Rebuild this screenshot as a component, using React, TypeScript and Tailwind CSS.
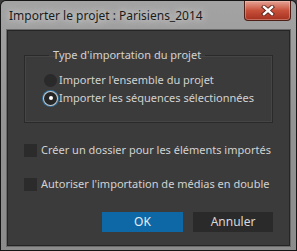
import React from 'react';

const font = { fontFamily: '"Noto Sans", "Open Sans", sans-serif' };

const Radio: React.FC<{ checked?: boolean; label: string }> = ({ checked, label }) => (
  <label className="flex h-[18px] items-center gap-[2px] whitespace-nowrap leading-[18px]">
    {checked ? (
      <span className="flex h-[13px] w-[13px] items-center justify-center rounded-full bg-[#262626] shadow-[0_0_0_1px_#c9c9c9,0_0_0_2px_#2f6f9c]">
        <span className="h-[4px] w-[4px] rounded-full bg-white" />
      </span>
    ) : (
      <span className="h-[13px] w-[13px] rounded-full bg-[#2a2a2a]" />
    )}
    <span>{label}</span>
  </label>
);

const Check: React.FC<{ label: string }> = ({ label }) => (
  <label className="flex h-[16px] items-center gap-[4px] whitespace-nowrap leading-[16px]">
    <span className="h-[13px] w-[13px] shrink-0 bg-[#2b2b2b]" />
    <span>{label}</span>
  </label>
);

const App: React.FC = () => {
  return (
    <div className="h-[251px] w-[297px] overflow-hidden bg-[#3a3a3a]">
      <div className="h-full w-full rounded-t-[6px] bg-[#161616] p-px" style={font}>
        <div className="flex h-full flex-col rounded-t-[5px] bg-gradient-to-b from-[#a3a3a3] via-[#939393] to-[#8c8c8c] px-[6px] pb-[4px]">
          {/* Title bar */}
          <div className="flex h-[29px] shrink-0 justify-between">
            <div className="pl-[2px] pt-[6px] text-[12px] text-[#1b1b1b] [text-shadow:0_0_6px_#d8d8d8,0_0_10px_#cfcfcf]">
              Importer le projet : Parisiens_2014
            </div>
            <button className="mr-[-1px] flex h-[20px] w-[47px] items-center justify-center rounded-b-[4px] border border-t-0 border-[#4e2018] bg-gradient-to-b from-[#e3a395] via-[#c7503a] to-[#a5301f] shadow-[inset_0_0_0_1px_rgba(255,220,210,0.35)]">
              <svg width="14" height="11" viewBox="0 0 14 11">
                <path d="M3 2 L11 9 M11 2 L3 9" stroke="#5a2218" strokeWidth="4.2" strokeLinecap="square" />
                <path d="M3 2 L11 9 M11 2 L3 9" stroke="#ffffff" strokeWidth="2.4" strokeLinecap="square" />
              </svg>
            </button>
          </div>

          {/* Content */}
          <div className="flex flex-1 flex-col border border-[#252525] bg-[#3b3b3b] px-[16px] pt-[16px] text-[11px] text-[#d2d2d2] shadow-[0_0_0_1px_#6a6a6a]">
            <fieldset className="h-[76px] shrink-0 border border-[#2a2a2a] pl-[19px] pt-[8px] shadow-[inset_0_0_0_1px_#454545]">
              <legend className="ml-[5px] px-[4px] leading-[16px]">Type d'importation du projet</legend>
              <Radio label="Importer l'ensemble du projet" />
              <Radio checked label="Importer les séquences sélectionnées" />
            </fieldset>

            <div className="mt-[19px] flex flex-col gap-[18px]">
              <Check label="Créer un dossier pour les éléments importés" />
              <Check label="Autoriser l'importation de médias en double" />
            </div>

            <div className="mt-[20px] flex justify-end gap-[10px]">
              <button className="h-[20px] w-[81px] bg-[#0d68a5] text-[12px] text-[#e6eef5]">OK</button>
              <button className="h-[20px] w-[80px] bg-[#2a2a2a] text-[12px] text-[#d8d8d8]">Annuler</button>
            </div>
          </div>
        </div>
      </div>
    </div>
  );
};

export default App;
